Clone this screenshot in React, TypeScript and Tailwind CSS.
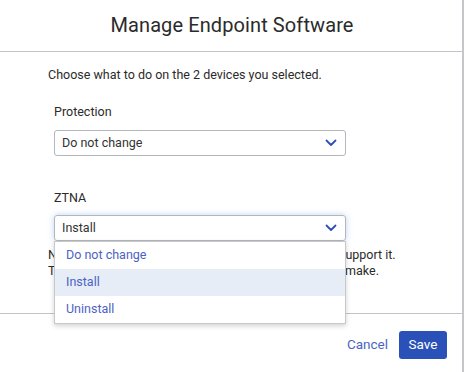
import { useState } from 'react';

const Chevron = () => (
  <svg width="12" height="8" viewBox="0 0 12 8" fill="none" className="shrink-0">
    <path d="M1.5 1.5L6 6L10.5 1.5" stroke="#2f4fb8" strokeWidth="1.8" strokeLinecap="round" strokeLinejoin="round" />
  </svg>
);

const options = ['Do not change', 'Install', 'Uninstall'];

export default function App() {
  const [protection] = useState('Do not change');
  const [ztna] = useState('Install');

  return (
    <div
      className="w-[465px] h-[372px] bg-white overflow-hidden"
      style={{ fontFamily: 'Roboto, "Noto Sans", sans-serif' }}
    >
      <div className="w-[464px] h-full border-r-2 border-[#c4c6c9] flex flex-col">
        <div className="h-[52px] shrink-0 border-b border-[#c2c4c7] flex items-center justify-center pb-[1px] pl-[2px]">
          <h1 className="text-[20px] text-[#2b2b2b] tracking-[0.1px]">Manage Endpoint Software</h1>
        </div>

        <div className="flex-1 pl-[48px] pt-[14px]">
          <p className="text-[12.5px] leading-[18px] text-[#2b2b2b]">Choose what to do on the 2 devices you selected.</p>

          <div className="pl-[6px] pt-[19px]">
            <label className="block text-[12.5px] leading-[18px] text-[#2b2b2b]">Protection</label>
            <div className="mt-[9px] w-[292px] h-[26px] border border-[#b3b7bb] rounded-[3px] flex items-center justify-between pl-[7px] pr-[8px]">
              <span className="text-[12.5px] text-[#333]">{protection}</span>
              <Chevron />
            </div>

            <label className="block mt-[33px] text-[12.5px] leading-[18px] text-[#2b2b2b]">ZTNA</label>
            <div className="relative mt-[8px] w-[292px]">
              <div className="h-[26px] border border-[#b3b7bb] rounded-[3px] flex items-center justify-between pl-[7px] pr-[8px] shadow-[0_0_6px_rgba(80,130,220,0.35)]">
                <span className="text-[12.5px] text-[#333]">{ztna}</span>
                <Chevron />
              </div>
              <ul className="absolute left-0 top-[26px] w-[292px] bg-white border border-[#c6c8cb] shadow-[0_2px_5px_rgba(0,0,0,0.18)] z-10">
                {options.map((o) => (
                  <li
                    key={o}
                    className={`h-[27px] flex items-center pl-[11px] text-[12.5px] text-[#4c62c4] ${o === ztna ? 'bg-[#e6edf7]' : ''}`}
                  >
                    {o}
                  </li>
                ))}
              </ul>
            </div>
          </div>

          <div className="pt-[6px] text-[12.5px] leading-[16px] text-[#2b2b2b] whitespace-nowrap">
            <p>Note: ZTNA will only be installed on the devices that support it.</p>
            <p>The devices will get updated with all the changes you make.</p>
          </div>
        </div>

        <div className="h-[59px] shrink-0 border-t border-[#c2c4c7] flex items-center justify-end gap-[11px] pr-[15px] pt-[3px]">
          <button className="text-[13.5px] text-[#4a66c4]">Cancel</button>
          <button className="w-[48px] h-[28px] rounded-[3px] bg-[#2a51b7] text-white text-[13.5px]">Save</button>
        </div>
      </div>
    </div>
  );
}
